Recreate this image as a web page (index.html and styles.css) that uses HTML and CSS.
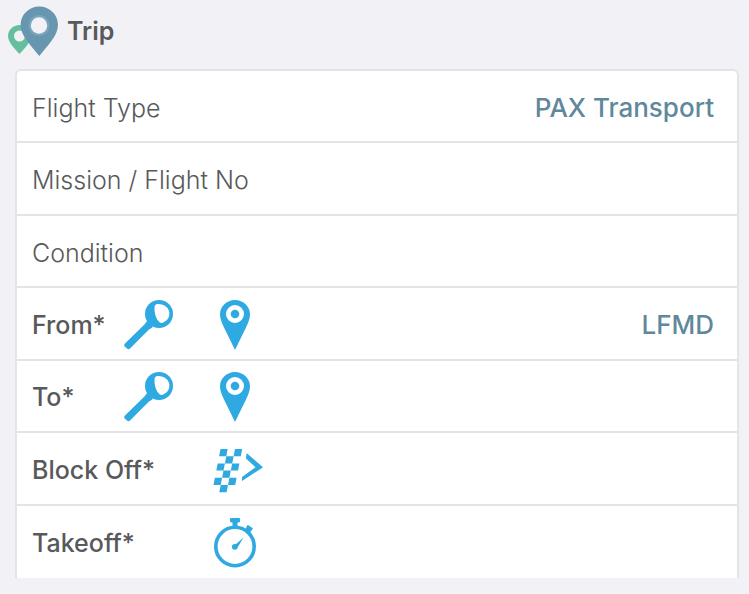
FILE: index.html
```html
<!DOCTYPE html>
<html lang="en">
<head>
    <meta charset="UTF-8">
    <meta name="viewport" content="width=device-width, initial-scale=1.0">
    <title>Trip</title>
    <link rel="stylesheet" href="styles.css">
</head>
<body>
    <!-- shared icons -->
    <svg class="icon-defs" aria-hidden="true">
        <symbol id="icon-search" viewBox="0 0 50 50">
            <path fill-rule="evenodd" d="M35 0a14 14 0 1 1 0 28a14 14 0 1 1 0-28zM34 4C31 4 30.500 6 30.500 9C30.500 14 32.500 19.500 35.500 22.200C37 23.500 39 23 41 21.500C44 19.500 45.400 17 45.400 13.500C45.400 8 40.500 4 34 4z"/>
            <path d="M22.500 22.500L27.500 27L6 48.500Q4.500 50 3 48.500L.7 46.500Q-.5 45 1 43.500z"/>
            <path d="M23 21l6 6-3 2-5-5z"/>
        </symbol>
        <symbol id="icon-pin" viewBox="0 0 56 50">
            <path fill-rule="evenodd" d="M27 0C35.500 0 42 6.500 42 14.500C42 19 40 23 38 27.500L27 50L16 27.500C14 23 12 19 12 14.500C12 6.500 18.500 0 27 0zM27 5a9 9 0 1 0 0 18a9 9 0 1 0 0-18z"/>
            <circle cx="27" cy="14" r="4.300"/>
        </symbol>
    </svg>

    <main class="page">
        <header class="section-title">
            <svg class="logo" viewBox="0 0 50 50" aria-hidden="true">
                <path fill="#66bf9c" fill-rule="evenodd" d="M11.500 19C18 19 23 24 23 30C23 36 17 42 11.500 48C6 42 0 36 0 30C0 24 5 19 11.500 19zM11.500 24.500a5.500 5.500 0 1 0 0 11a5.500 5.500 0 1 0 0-11z"/>
                <path fill="#6797b0" d="M31.300 .5C41.800 .5 50 8.700 50 19C50 30 38.500 40.500 31.300 50C24.100 40.500 12.600 30 12.600 19C12.600 8.700 20.800 .5 31.300 .5z"/>
                <circle cx="31" cy="19.500" r="10.500" fill="#7ca5bb"/>
                <circle cx="31" cy="19.500" r="8.200" fill="#f2f1f6"/>
            </svg>
            <h1>Trip</h1>
        </header>

        <form class="trip-form">
            <div class="row">
                <label class="wide" for="flightType">Flight Type</label>
                <input type="text" id="flightType" value="PAX Transport">
            </div>
            <div class="row">
                <label class="wide" for="flightNo">Mission / Flight No</label>
                <input type="text" id="flightNo">
            </div>
            <div class="row">
                <label class="wide" for="condition">Condition</label>
                <input type="text" id="condition">
            </div>
            <div class="row required">
                <label for="from">From*</label>
                <button type="button" class="icon-button" aria-label="Search departure">
                    <svg class="icon-search"><use href="#icon-search"/></svg>
                </button>
                <button type="button" class="icon-button" aria-label="Locate departure">
                    <svg class="icon"><use href="#icon-pin"/></svg>
                </button>
                <input type="text" id="from" value="LFMD">
            </div>
            <div class="row required">
                <label for="to">To*</label>
                <button type="button" class="icon-button" aria-label="Search destination">
                    <svg class="icon-search"><use href="#icon-search"/></svg>
                </button>
                <button type="button" class="icon-button" aria-label="Locate destination">
                    <svg class="icon"><use href="#icon-pin"/></svg>
                </button>
                <input type="text" id="to">
            </div>
            <div class="row required">
                <label class="medium" for="blockOff">Block Off*</label>
                <button type="button" class="icon-button" aria-label="Set block off time">
                    <svg class="icon" viewBox="0 0 56 50">
                        <path d="M12.500 4h7.200l-1.400 7.200h-7.200zM27 4h7.200l-1.400 7.200h-7.200zM18.300 11.200h7.300l-1.400 7.200h-7.300zM9.700 18.400h7.200l-1.400 7.200H8.300zM24.200 18.400h7.200L30 25.600h-7.200zM15.500 25.600h7.300l-1.400 7.200h-7.300zM6.900 32.800h7.200L12.700 40H5.500zM21.400 32.800h7.200L27.200 40H20zM12.700 40H20l-1.400 7.200h-7.300z"/>
                        <path d="M38.600 8L55 22.300L34 36V32L47.500 22.300L38 13.500z"/>
                    </svg>
                </button>
                <input type="text" id="blockOff">
            </div>
            <div class="row required">
                <label class="medium" for="takeoff">Takeoff*</label>
                <button type="button" class="icon-button" aria-label="Set takeoff time">
                    <svg class="icon" viewBox="0 0 56 50">
                        <circle cx="27" cy="28.500" r="19.200" fill="none" stroke="#2fa9e1" stroke-width="3.600"/>
                        <path d="M23 0h8q1 0 1 1v2q0 1.500-1.500 1.500h-1V10h-5V4.500h-1Q22 4.500 22 3V1q0-1 1-1z"/>
                        <path d="M40 7l4.500 3q.5.500 0 1.200L42.300 14l1 1.500-3 1-3.500-3L39 7.500z"/>
                        <path d="M35.500 19.500L29.600 29.500L27 27z"/>
                        <circle cx="26.800" cy="28.800" r="2.900"/>
                    </svg>
                </button>
                <input type="text" id="takeoff">
            </div>
        </form>
    </main>
</body>
</html>
```

FILE: styles.css
```css
* {
    box-sizing: border-box;
}
body {
    margin: 0;
    font-family: Inter, "Liberation Sans", sans-serif;
    font-size: 25px;
    color: #58595a;
    background-color: #f2f1f6;
}
.icon-defs {
    display: none;
}
.page {
    display: flex;
    flex-direction: column;
    min-height: 100vh;
    padding: 6px 10px 16px 15px;
}
.section-title {
    display: flex;
    align-items: center;
    gap: 9px;
    height: 50px;
    margin: 0 0 13px -7px;
}
.section-title h1 {
    margin: 0;
    font-size: 25px;
    font-weight: 600;
}
.logo {
    width: 50px;
    height: 50px;
}
.trip-form {
    display: flex;
    flex-direction: column;
    flex: 1;
    background-color: #fff;
    border: 2px solid #e4e4e6;
    border-bottom: none;
    border-radius: 6px 6px 0 0;
}
.row {
    display: grid;
    grid-template-columns: 92px 84px 56px 1fr;
    align-items: center;
    flex: 1;
    min-height: 60px;
    padding: 3px 23px 0 15px;
    border-bottom: 2px solid #e4e4e6;
}
.row:last-child {
    border-bottom: none;
}
label {
    font-weight: 300;
    white-space: nowrap;
}
.required label {
    font-weight: 500;
}
.wide {
    grid-column: span 3;
}
.medium {
    grid-column: span 2;
}
.row input {
    width: 100%;
    min-width: 0;
    padding: 0;
    border: none;
    outline: none;
    background: none;
    font: inherit;
    font-size: 26px;
    font-weight: 500;
    color: #5f889c;
    text-align: right;
}
.icon-button {
    display: flex;
    padding: 0;
    border: none;
    background: none;
    cursor: pointer;
}
.icon-button svg {
    height: 50px;
    fill: #2fa9e1;
}
.icon {
    width: 56px;
}
.icon-search {
    width: 50px;
}
```
